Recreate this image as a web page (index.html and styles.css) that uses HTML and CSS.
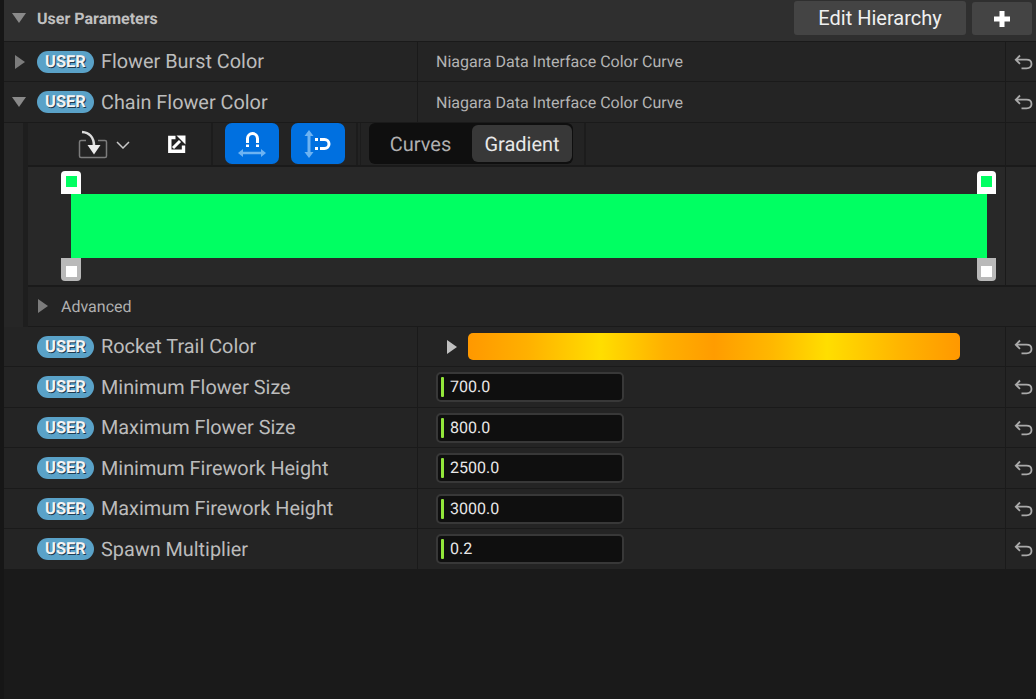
FILE: index.html
```html
<!DOCTYPE html>
<html lang="en">
<head>
<meta charset="utf-8">
<title>User Parameters</title>
<link rel="stylesheet" href="styles.css">
</head>
<body>
<svg class="defs" width="0" height="0" aria-hidden="true">
  <symbol id="reset" viewBox="0 0 19 16"><path d="M6 1.500 L1.800 5.700 L6 9.900 M2 5.700 H12.500 C16 5.700 17.500 7.500 17.500 10 C17.500 12.500 16 14.300 12.500 14.300 H7.500" fill="none" stroke="currentColor" stroke-width="1.800"/></symbol>
</svg>
<main class="panel">
  <header class="head">
    <span class="tri tri-down"></span>
    <span class="head-title">User Parameters</span>
    <span class="head-actions">
      <button class="btn btn-edit">Edit Hierarchy</button>
      <button class="btn btn-plus"><svg width="18" height="18" viewBox="0 0 18 18"><path d="M6.500 1H11.500V6.500H17V11.500H11.500V17H6.500V11.500H1V6.500H6.500Z" fill="#fff"/></svg></button>
    </span>
  </header>

  <div class="row">
    <div class="name"><span class="tri tri-right"></span><span class="badge">USER</span><span class="label">Flower Burst Color</span></div>
    <div class="value"><span class="type">Niagara Data Interface Color Curve</span></div>
    <div class="reset"><svg width="19" height="16"><use href="#reset"/></svg></div>
  </div>
  <div class="row">
    <div class="name"><span class="tri tri-down"></span><span class="badge">USER</span><span class="label">Chain Flower Color</span></div>
    <div class="value"><span class="type">Niagara Data Interface Color Curve</span></div>
    <div class="reset"><svg width="19" height="16"><use href="#reset"/></svg></div>
  </div>

  <section class="nested">
    <div class="toolbar">
      <div class="tool-main">
        <div class="tool-group tool-import">
          <svg class="ic-import" width="30" height="30" viewBox="0 0 30 30"><path d="M8 10.500H3A1.500 1.500 0 0 0 1.500 12V26A1.500 1.500 0 0 0 3 27.500H27A1.500 1.500 0 0 0 28.500 26V12A1.500 1.500 0 0 0 27 10.500H20" fill="none" stroke="#7c7c7c" stroke-width="1.500"/><path d="M4 2C11 2.500 16 7 16 16" fill="none" stroke="#dcdcdc" stroke-width="2.600"/><path d="M9.500 15H22.500L16 24.500Z" fill="#ececec"/></svg>
          <svg class="ic-chev" width="14" height="8" viewBox="0 0 14 8"><path d="M1 1L7 7L13 1" fill="none" stroke="#c8c8c8" stroke-width="1.500"/></svg>
          <svg class="ic-ext" width="18" height="18" viewBox="0 0 18 18"><path d="M7.500 2.500H1.800V16.200H15.500V10.500" fill="none" stroke="#fff" stroke-width="3.400"/><path d="M5 13L12 6" fill="none" stroke="#fff" stroke-width="3"/><path d="M8.500 .500H17.500V9.500Z" fill="#fff"/></svg>
        </div>
        <div class="tool-group tool-snap">
          <button class="snap"><svg width="30" height="26" viewBox="0 0 30 26"><path d="M10.500 12V7.500A5 5 0 0 1 20.500 7.500V12" fill="none" stroke="#fff" stroke-width="3"/><path d="M9 13.500H12V16H9ZM19 13.500H22V16H19Z" fill="#fff"/><path d="M4 22H26" fill="none" stroke="#6db3f2" stroke-width="2.500"/><path d="M1 22L6 18V26ZM29 22L24 18V26Z" fill="#6db3f2"/></svg></button>
          <button class="snap"><svg width="28" height="30" viewBox="0 0 28 30"><path d="M5 4V26" fill="none" stroke="#6db3f2" stroke-width="3"/><path d="M5 1L9.500 7H.500ZM5 29L9.500 23H.500Z" fill="#6db3f2"/><path d="M16 10.500H20.500A4.500 4.500 0 0 1 20.500 19.500H16" fill="none" stroke="#fff" stroke-width="3"/><rect x="11" y="9" width="3" height="3" fill="#fff"/><rect x="11" y="18" width="3" height="3" fill="#fff"/></svg></button>
        </div>
        <div class="tool-group tool-tabs">
          <div class="seg"><span class="seg-item">Curves</span><span class="seg-item seg-on">Gradient</span></div>
        </div>
      </div>
      <div class="reset"></div>
    </div>
    <div class="gradient-row">
      <div class="gradient">
        <span class="stop stop-top stop-l"><i></i></span>
        <span class="stop stop-top stop-r"><i></i></span>
        <div class="bar"></div>
        <span class="stop stop-bot stop-l"><i></i></span>
        <span class="stop stop-bot stop-r"><i></i></span>
      </div>
      <div class="reset"></div>
    </div>
    <div class="advanced"><span class="tri tri-right tri-small"></span><span class="adv-label">Advanced</span></div>
  </section>

  <div class="row">
    <div class="name"><span class="tri-space"></span><span class="badge">USER</span><span class="label">Rocket Trail Color</span></div>
    <div class="value value-grad"><span class="tri tri-right tri-light"></span><span class="ramp"></span></div>
    <div class="reset"><svg width="19" height="16"><use href="#reset"/></svg></div>
  </div>
  <div class="row">
    <div class="name"><span class="tri-space"></span><span class="badge">USER</span><span class="label">Minimum Flower Size</span></div>
    <div class="value"><span class="num">700.0</span></div>
    <div class="reset"><svg width="19" height="16"><use href="#reset"/></svg></div>
  </div>
  <div class="row">
    <div class="name"><span class="tri-space"></span><span class="badge">USER</span><span class="label">Maximum Flower Size</span></div>
    <div class="value"><span class="num">800.0</span></div>
    <div class="reset"><svg width="19" height="16"><use href="#reset"/></svg></div>
  </div>
  <div class="row">
    <div class="name"><span class="tri-space"></span><span class="badge">USER</span><span class="label">Minimum Firework Height</span></div>
    <div class="value"><span class="num">2500.0</span></div>
    <div class="reset"><svg width="19" height="16"><use href="#reset"/></svg></div>
  </div>
  <div class="row">
    <div class="name"><span class="tri-space"></span><span class="badge">USER</span><span class="label">Maximum Firework Height</span></div>
    <div class="value"><span class="num">3000.0</span></div>
    <div class="reset"><svg width="19" height="16"><use href="#reset"/></svg></div>
  </div>
  <div class="row">
    <div class="name"><span class="tri-space"></span><span class="badge">USER</span><span class="label">Spawn Multiplier</span></div>
    <div class="value"><span class="num">0.2</span></div>
    <div class="reset"><svg width="19" height="16"><use href="#reset"/></svg></div>
  </div>
</main>
</body>
</html>
```
FILE: styles.css
```css
* { box-sizing: border-box; }
html, body { margin: 0; height: 100%; overflow: hidden; }
body {
  background: #1a1a1a;
  font-family: Roboto, "Liberation Sans", sans-serif;
  color: #c0c0c0;
  border-left: 4px solid #161616;
  text-rendering: geometricPrecision;
}
.defs { position: absolute; }
.panel { width: 1032px; display: flex; flex-direction: column; }

.head {
  height: 41.750px;
  background: #2f2f2f;
  border-bottom: 1px solid #1a1a1a;
  display: flex;
  align-items: center;
  padding: 0 0 4px 8px;
}
.head-title { margin-left: 11px; font-size: 16px; font-weight: 700; color: #c0c0c0; }
.head-actions { margin-left: auto; display: flex; gap: 6px; padding: 1px 4px 0 0; align-self: flex-start; }
.btn {
  border: 0;
  background: #444;
  color: #f0f0f0;
  font-family: inherit;
  height: 34px;
  border-radius: 3px;
  padding: 0;
  display: flex;
  align-items: center;
  justify-content: center;
}
.btn-edit { width: 172px; font-size: 20px; }
.btn-plus { width: 60px; height: 33px; margin-top: 1px; }

.tri { width: 0; height: 0; flex: none; display: block; }
.tri-down { border-left: 7px solid transparent; border-right: 7px solid transparent; border-top: 10px solid #8a8a8a; }
.tri-right { border-top: 7px solid transparent; border-bottom: 7px solid transparent; border-left: 10px solid #7c7c7c; margin: 0 1px 0 3px; }
.tri-light { border-left-color: #c0c0c0; }
.tri-space { width: 14px; flex: none; }

.row {
  height: 40.500px;
  display: flex;
  background: #242424;
  border-bottom: 1px solid #1a1a1a;
}
.name {
  width: 414px;
  flex: none;
  display: flex;
  align-items: center;
  padding-left: 8px;
  border-right: 1px solid #1a1a1a;
}
.badge {
  margin-left: 11px;
  width: 57px;
  height: 22px;
  flex: none;
  border-radius: 11px;
  background: #5aa2c8;
  color: #f4f4f4;
  font-size: 16.500px;
  font-weight: 700;
  line-height: 23px;
  text-align: center;
  text-shadow: 1px 1px 0 #1d3a4e;
}
.label { margin-left: 7px; font-size: 19.850px; line-height: 23px; color: #bcbcbc; white-space: nowrap; }
.value {
  flex: 1;
  display: flex;
  align-items: center;
  padding-left: 18px;
  min-width: 0;
}
.type { font-size: 16px; color: #b4b4b4; }
.reset {
  width: 31px;
  flex: none;
  border-left: 1px solid #1a1a1a;
  display: flex;
  align-items: center;
  padding-left: 8px;
  color: #aaa;
}
.value-grad { padding-left: 26px; }
.ramp {
  margin-left: 10px;
  width: 492px;
  height: 27px;
  border-radius: 5px;
  background: linear-gradient(90deg, #ff9800 0%, #ffb000 12%, #ffde00 27%, #ffb000 40%, #ff9c00 50%, #ffb800 62%, #ffde00 73%, #ffb400 88%, #ff9800 100%);
}
.num {
  width: 188px;
  height: 30px;
  background: #0f0f0f;
  border: 2px solid #383838;
  border-radius: 5px;
  font-size: 16px;
  color: #e8e8e8;
  line-height: 26px;
  padding-left: 12px;
  position: relative;
}
.num::before {
  content: "";
  position: absolute;
  left: 3px;
  top: 3px;
  width: 3px;
  height: 20px;
  border-radius: 1px;
  background: #92e63a;
}

.nested {
  background: #242424;
  border-left: 19px solid #262626;
  display: flex;
  flex-direction: column;
  box-shadow: inset 5px 0 0 #1e1e1e;
}
.toolbar {
  height: 44.250px;
  margin-left: 5px;
  display: flex;
  border-bottom: 2px solid #1a1a1a;
  background: #232323;
}
.tool-main { flex: 1; display: flex; min-width: 0; }
.tool-group { display: flex; align-items: center; border-right: 2px solid #1c1c1c; }
.tool-import { width: 185px; padding-left: 50px; }
.ic-import { flex: none; margin-top: 3px; }
.ic-chev { margin-left: 8px; margin-top: 2px; flex: none; }
.ic-ext { margin-left: 38px; flex: none; }
.tool-snap { width: 145px; padding-left: 12px; gap: 12px; }
.snap {
  width: 54px;
  height: 41px;
  border: 0;
  padding: 0;
  border-radius: 7px;
  background: #0070e0;
  display: flex;
  align-items: center;
  justify-content: center;
}
.tool-tabs { width: 226px; margin-left: 2px; border-left: 1px solid #1c1c1c; padding-left: 8px; }
.seg {
  width: 204px;
  height: 41px;
  padding: 2px 1px 2px 2px;
  background: #0f0f0f;
  border-radius: 6px;
  display: flex;
  align-items: center;
}
.seg-item { font-size: 20px; text-align: center; color: #b0b0b0; width: 99px; }
.seg-on {
  width: 100px;
  height: 37px;
  margin-left: auto;
  line-height: 38px;
  background: #383838;
  color: #e8e8e8;
  border-radius: 6px;
}

.gradient-row {
  height: 120px;
  margin-left: 5px;
  display: flex;
  border-bottom: 2px solid #1a1a1a;
  background: #282828;
}
.gradient { flex: 1; min-width: 0; position: relative; padding: 27px 18px 0 43px; }
.bar { height: 64px; background: #00ff62; }
.stop { position: absolute; width: 19px; height: 23px; display: flex; justify-content: center; }
.stop i { width: 11px; height: 11px; display: block; }
.stop-top { top: 4px; padding-top: 5px; background: #fff; border-radius: 4px 4px 0 0; }
.stop-top i { background: #00ff62; }
.stop-bot { top: 91px; padding-top: 8px; background: #b9b9b9; border-radius: 0 0 4px 4px; }
.stop-bot i { background: #fff; }
.stop-l { left: 33px; width: 20px; }
.stop-r { right: 9px; }

.advanced {
  height: 39.750px;
  margin-left: 5px;
  display: flex;
  align-items: center;
  padding: 0 0 0 7px;
  border-bottom: 1px solid #1a1a1a;
}
.adv-label { margin-left: 12px; font-size: 16px; color: #b0b0b0; }
```
